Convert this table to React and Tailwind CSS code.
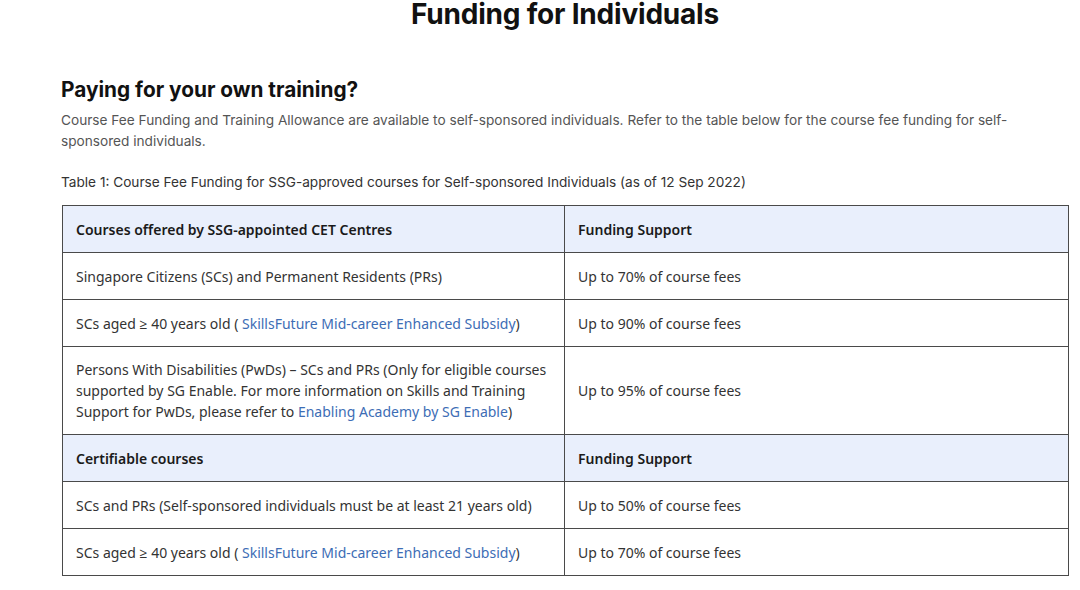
export default function App() {
  const link = "text-[#3d6db5]";
  const td = "border border-[#4a4a4a] px-[13px] align-middle text-[14px] leading-[21px] text-[#333]";
  const th = "border border-[#4a4a4a] px-[13px] align-middle text-[14px] leading-[21px] text-[#1a1a1a] font-semibold bg-[#e9effc] text-left";
  return (
    <div className="w-[1080px] h-[590px] bg-white overflow-hidden" style={{ fontFamily: "Inter, 'Liberation Sans', sans-serif" }}>
      <div className="pl-[61px] w-[1069px]">
        <h1 className="text-center text-[28px] leading-[30px] -mt-[1px] font-bold text-[#111] tracking-[-0.2px]">Funding for Individuals</h1>
        <h2 className="mt-[47px] text-[20.8px] leading-[28px] font-bold text-[#111]">Paying for your own training?</h2>
        <p className="mt-[6px] w-[980px] text-[13.65px] leading-[21px] text-[#555]">
          Course Fee Funding and Training Allowance are available to self-sponsored individuals. Refer to the table below for the course fee funding for self-sponsored individuals.
        </p>
        <p className="mt-[20px] text-[13.65px] leading-[21px] text-[#333]">
          Table 1: Course Fee Funding for SSG-approved courses for Self-sponsored Individuals (as of 12 Sep 2022)
        </p>
        <table className="mt-[12px] ml-[1px] w-[1007px] border-collapse" style={{ fontFamily: "'Noto Sans', 'Open Sans', sans-serif" }}>
          <colgroup>
            <col className="w-[502px]" />
            <col />
          </colgroup>
          <tbody>
            <tr className="h-[47px]">
              <th className={th}>Courses offered by SSG-appointed CET Centres</th>
              <th className={th}>Funding Support</th>
            </tr>
            <tr className="h-[47px]">
              <td className={td}>Singapore Citizens (SCs) and Permanent Residents (PRs)</td>
              <td className={td}>Up to 70% of course fees</td>
            </tr>
            <tr className="h-[47px]">
              <td className={td}>SCs aged ≥ 40 years old ( <span className={link}>SkillsFuture Mid-career Enhanced Subsidy</span>)</td>
              <td className={td}>Up to 90% of course fees</td>
            </tr>
            <tr className="h-[88px]">
              <td className={td}>Persons With Disabilities (PwDs) – SCs and PRs (Only for eligible courses supported by SG Enable. For more information on Skills and Training Support for PwDs, please refer to <span className={link}>Enabling Academy by SG Enable</span>)</td>
              <td className={td}>Up to 95% of course fees</td>
            </tr>
            <tr className="h-[47px]">
              <th className={th}>Certifiable courses</th>
              <th className={th}>Funding Support</th>
            </tr>
            <tr className="h-[47px]">
              <td className={td}>SCs and PRs (Self-sponsored individuals must be at least 21 years old)</td>
              <td className={td}>Up to 50% of course fees</td>
            </tr>
            <tr className="h-[47px]">
              <td className={td}>SCs aged ≥ 40 years old ( <span className={link}>SkillsFuture Mid-career Enhanced Subsidy</span>)</td>
              <td className={td}>Up to 70% of course fees</td>
            </tr>
          </tbody>
        </table>
      </div>
    </div>
  );
}
